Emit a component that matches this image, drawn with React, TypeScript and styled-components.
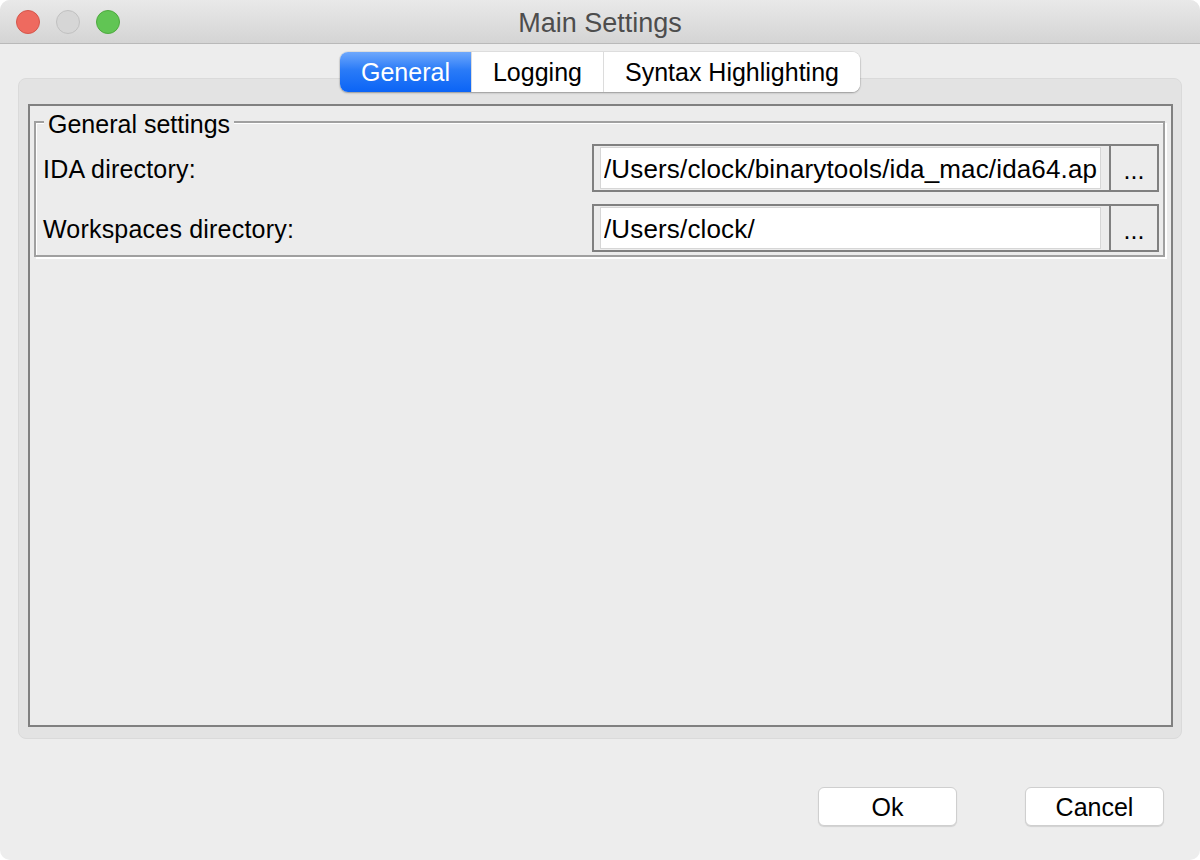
import React from "react";
import styled, { createGlobalStyle } from "styled-components";

const GlobalStyle = createGlobalStyle`
  html, body { margin: 0; padding: 0; background: #ffffff; }
  body { font-family: "Liberation Sans", Arial, Helvetica, sans-serif; }
  * { box-sizing: border-box; }
`;

const Window = styled.div`
  width: 1200px;
  height: 860px;
  background: #ededed;
  border-radius: 10px;
  overflow: hidden;
  display: flex;
  flex-direction: column;
`;

const TitleBar = styled.div`
  height: 44px;
  flex: none;
  display: grid;
  grid-template-columns: 1fr auto 1fr;
  align-items: center;
  padding: 1px 16px 0;
  background: linear-gradient(#e9e9e9, #d4d4d4);
  border-bottom: 1px solid #b9b9b9;
`;

const Lights = styled.div`
  display: flex;
  gap: 16px;
`;

const Light = styled.span<{ $fill: string; $edge: string }>`
  width: 24px;
  height: 24px;
  border-radius: 50%;
  background: ${(p) => p.$fill};
  border: 1px solid ${(p) => p.$edge};
`;

const Title = styled.div`
  font-size: 27px;
  color: #4d4d4d;
  padding-top: 2px;
`;

const Body = styled.div`
  flex: 1;
  display: flex;
  flex-direction: column;
  padding-top: 8px;
`;

const TabBar = styled.div`
  align-self: center;
  display: flex;
  height: 40px;
  position: relative;
  z-index: 1;
  background: #fff;
  border-radius: 8px;
  box-shadow: 0 0 0 1px rgba(0, 0, 0, 0.05), 0 1px 2px rgba(0, 0, 0, 0.3);
`;

const Tab = styled.div<{ $active?: boolean }>`
  display: flex;
  align-items: center;
  padding: 0 21px;
  font-size: 25px;
  color: ${(p) => (p.$active ? "#ffffff" : "#000000")};
  background: ${(p) =>
    p.$active ? "linear-gradient(#6ea8fc, #2a7bf7 45%, #0b64f6)" : "#ffffff"};
  & + & {
    border-left: 1px solid #dcdcdc;
  }
  &:first-child {
    border-radius: 8px 0 0 8px;
  }
  &:last-child {
    border-radius: 0 8px 8px 0;
  }
`;

const Pane = styled.div`
  flex: 1;
  margin: -14px 18px 0;
  display: flex;
  flex-direction: column;
  background: #e3e3e3;
  border: 1px solid #dadada;
  border-radius: 8px;
  padding: 25px 8px 11px 9px;
`;

const Frame = styled.div`
  flex: 1;
  border: 2px solid #808080;
  background: #ececec;
  padding: 15px 6px 0 4px;
`;

const GroupBox = styled.div`
  border: 2px solid #a0a0a0;
  box-shadow: inset 1px 1px 0 #ffffff, 2px 2px 0 #ffffff;
`;

const GroupTitle = styled.div`
  width: fit-content;
  margin: -14px 0 0 8px;
  padding: 1px 4px 0;
  line-height: 28px;
  font-size: 25px;
  color: #000;
  background: #ececec;
`;

const Rows = styled.div`
  display: grid;
  row-gap: 12px;
  padding: 6px 4px 3px 7px;
`;

const Row = styled.div`
  display: grid;
  grid-template-columns: 1fr 567px;
  align-items: center;
  height: 48px;
`;

const Label = styled.div`
  font-size: 25px;
  letter-spacing: 0.2px;
  color: #000;
  padding-top: 3px;
`;

const InputGroup = styled.div`
  display: flex;
  height: 48px;
  border: 2px solid #808080;
  background: #ececec;
`;

const FieldWrap = styled.div`
  flex: 1;
  min-width: 0;
  display: flex;
  padding: 1px 8px 1px 6px;
`;

const Field = styled.div`
  flex: 1;
  min-width: 0;
  display: flex;
  align-items: center;
  padding: 3px 3px 0;
  background: #ffffff;
  border: 1px solid #d6d6d6;
`;

const FieldText = styled.span`
  flex: 1;
  min-width: 0;
  font-size: 26px;
  letter-spacing: 0.15px;
  color: #000;
  white-space: nowrap;
  overflow: hidden;
`;

const DotsButton = styled.div`
  width: 48px;
  flex: none;
  display: flex;
  align-items: center;
  justify-content: center;
  border-left: 2px solid #808080;
  font-size: 25px;
  color: #000;
  padding-top: 4px;
`;

const ButtonRow = styled.div`
  display: flex;
  justify-content: flex-end;
  gap: 68px;
  padding: 48px 36px 34px 0;
`;

const Button = styled.div`
  width: 139px;
  height: 39px;
  display: flex;
  align-items: center;
  justify-content: center;
  background: #ffffff;
  border: 1px solid #cfcfcf;
  border-radius: 6px;
  box-shadow: 0 1px 1px rgba(0, 0, 0, 0.12);
  font-size: 25px;
  color: #000;
  padding-top: 1px;
`;

const rows = [
  { label: "IDA directory:", value: "/Users/clock/binarytools/ida_mac/ida64.app" },
  { label: "Workspaces directory:", value: "/Users/clock/" },
];

export default function App() {
  return (
    <>
      <GlobalStyle />
      <Window>
        <TitleBar>
          <Lights>
            <Light $fill="#ee6a5f" $edge="#d4564b" />
            <Light $fill="#d6d6d6" $edge="#c0c0c0" />
            <Light $fill="#61c554" $edge="#4ea93f" />
          </Lights>
          <Title>Main Settings</Title>
          <div />
        </TitleBar>
        <Body>
          <TabBar>
            <Tab $active>General</Tab>
            <Tab>Logging</Tab>
            <Tab>Syntax Highlighting</Tab>
          </TabBar>
          <Pane>
            <Frame>
              <GroupBox>
                <GroupTitle>General settings</GroupTitle>
                <Rows>
                  {rows.map((r) => (
                    <Row key={r.label}>
                      <Label>{r.label}</Label>
                      <InputGroup>
                        <FieldWrap>
                          <Field>
                            <FieldText>{r.value}</FieldText>
                          </Field>
                        </FieldWrap>
                        <DotsButton>...</DotsButton>
                      </InputGroup>
                    </Row>
                  ))}
                </Rows>
              </GroupBox>
            </Frame>
          </Pane>
          <ButtonRow>
            <Button>Ok</Button>
            <Button>Cancel</Button>
          </ButtonRow>
        </Body>
      </Window>
    </>
  );
}
